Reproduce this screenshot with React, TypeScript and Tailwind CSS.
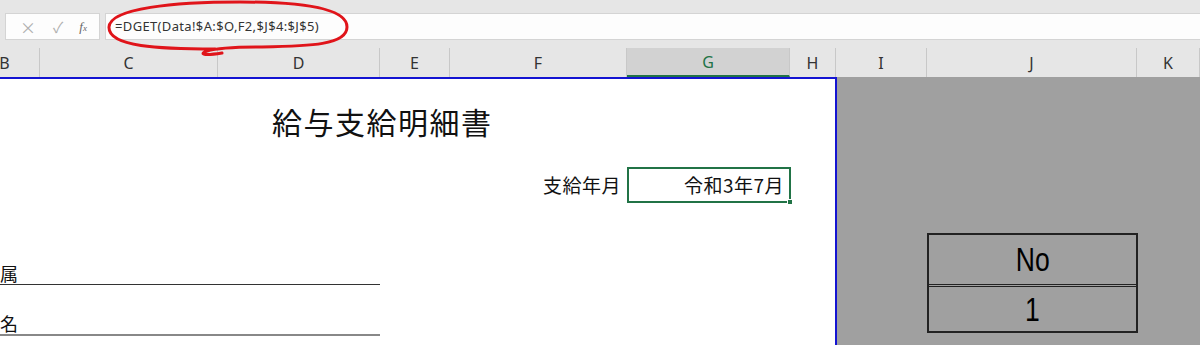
import React from 'react';

const COLUMNS = [
  { name: 'B', width: 70, offset: -30 },
  { name: 'C', width: 178 },
  { name: 'D', width: 162 },
  { name: 'E', width: 70 },
  { name: 'F', width: 177 },
  { name: 'G', width: 163, selected: true },
  { name: 'H', width: 46 },
  { name: 'I', width: 91 },
  { name: 'J', width: 210 },
  { name: 'K', width: 63 },
];

const FONT = { fontFamily: '"Noto Sans CJK JP", "Liberation Sans", sans-serif' };

// 数式バー
const FormulaBar = () => (
  <div className="relative h-[48px] bg-[#e6e6e6] pt-[13px]">
    <div className="flex h-[27px]">
      <div className="ml-[5px] flex h-full w-[95px] items-center border border-[#d4d4d4] bg-[#fdfdfd] text-[#b0b0b0]">
        <span className="ml-[14px] text-[16px] leading-none">×</span>
        <span className="ml-[17px] text-[15px] leading-none">✓</span>
        <span className="ml-[16px] font-['Liberation_Serif'] text-[13px] italic leading-none text-[#666]">
          f<span className="text-[9px]">x</span>
        </span>
      </div>
      <div className="ml-[5px] flex h-full flex-1 items-center border-y border-l border-[#d4d4d4] bg-[#fdfdfd] pl-[9px]">
        <span className="font-['Noto_Sans'] text-[13px] tracking-[0.35px] text-[#333]">=DGET(Data!$A:$O,F2,$J$4:$J$5)</span>
      </div>
    </div>
    <svg className="pointer-events-none absolute left-0 top-0" width="400" height="60">
      <path
        d="M 215 49 C 160 49, 108 47, 109 27 C 110 8, 175 2, 240 2 C 305 2, 347 9, 347 27 C 347 45, 310 46, 262 47 C 238 47, 217 48, 207 51 C 199 54, 203 56, 222 53"
        fill="none"
        stroke="#e0141a"
        strokeWidth="3"
        strokeLinecap="round"
      />
    </svg>
  </div>
);

// 列見出し
const ColumnHeader = () => (
  <div className="flex h-[29px] overflow-hidden bg-[#e6e6e6]">
    {COLUMNS.map((col) => (
      <div
        key={col.name}
        className={
          col.selected
            ? 'flex shrink-0 items-center justify-center border-r border-[#c8c8c8] border-b-2 border-b-[#217346] bg-[#d2d2d2] text-[#217346]'
            : 'flex shrink-0 items-center justify-center border-r border-[#c8c8c8] text-[#333]'
        }
        style={{ width: col.width, marginLeft: col.offset ?? 0 }}
      >
        <span className="font-['Noto_Sans'] text-[16px]">{col.name}</span>
      </div>
    ))}
  </div>
);

export default function App() {
  return (
    <div className="h-[345px] w-[1200px] overflow-hidden bg-white" style={FONT}>
      <FormulaBar />
      <ColumnHeader />
      <div className="flex h-[268px]">
        {/* 印刷範囲 */}
        <div className="w-[837px] shrink-0 border-r-2 border-t-2 border-[#1414d2] bg-white text-[#111]">
          <div className="mt-[22px] pl-[272px] text-[30px] leading-[40px] tracking-[1.5px]">給与支給明細書</div>
          <div className="mt-[26px] flex items-center">
            <div className="w-[621px] text-right text-[19px] tracking-[0.5px]">支給年月</div>
            <div className="relative ml-[6px] flex h-[36px] w-[164px] items-center justify-end border-2 border-[#217346] pr-[5px] text-[19px] tracking-[0.5px]">
              令和3年7月
              <span className="absolute -bottom-[4px] -right-[4px] h-[6px] w-[6px] border border-white bg-[#217346]" />
            </div>
          </div>
          <div className="mt-[59px] w-[380px] border-b border-[#333] text-[18px] leading-[22px]">属</div>
          <div className="mt-[27px] w-[380px] border-b-2 border-[#888] text-[18px] leading-[22px]">名</div>
        </div>
        <div className="flex-1 bg-[#a0a0a0]">
          <div className="ml-[90px] mt-[156px] w-[211px] border-2 border-[#222]">
            <div className="flex h-[52px] items-center justify-center border-b-[3px] border-double border-[#222] font-['Liberation_Sans'] text-[34px]">
              <span className="inline-block scale-x-[0.78]">No</span>
            </div>
            <div className="flex h-[44px] items-center justify-center font-['Liberation_Sans'] text-[34px]">
              <span className="inline-block scale-x-[0.78]">1</span>
            </div>
          </div>
        </div>
      </div>
    </div>
  );
}
